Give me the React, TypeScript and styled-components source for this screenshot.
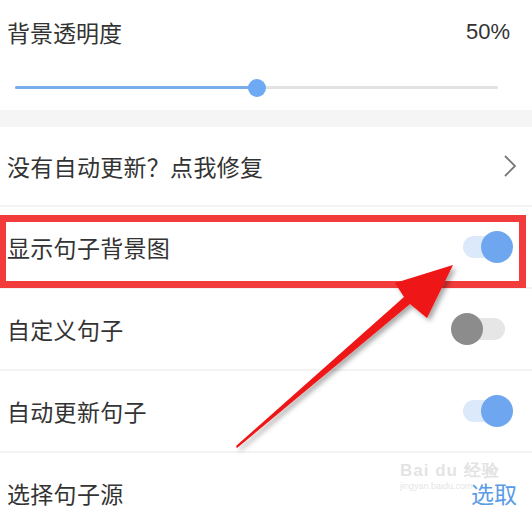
import React from "react";
import styled, { createGlobalStyle } from "styled-components";

const GlobalStyle = createGlobalStyle`
  html, body {
    margin: 0;
    padding: 0;
    background: #ffffff;
    font-family: "Noto Sans CJK SC", "Noto Sans", sans-serif;
  }
`;

const Page = styled.div`
  position: relative;
  width: 532px;
  height: 517px;
  overflow: hidden;
  background: #ffffff;
  color: #333333;
`;

const OpacitySection = styled.div`
  height: 110px;
  padding: 0 22px 0 7px;
  box-sizing: border-box;
  display: flex;
  flex-direction: column;
`;

const TitleRow = styled.div`
  display: flex;
  justify-content: space-between;
  align-items: center;
  height: 63px;
  font-size: 23px;
`;

const Percent = styled.span`
  font-family: "Liberation Sans", "Noto Sans", sans-serif;
  font-size: 22px;
  color: #333;
`;

const SliderTrack = styled.div`
  position: relative;
  margin: 23px 12px 0 8px;
  height: 3px;
  background: #e2e2e2;
  border-radius: 2px;
`;

const SliderFill = styled.div`
  height: 100%;
  background: #79acea;
  border-radius: 2px;
`;

const SliderThumb = styled.div`
  position: absolute;
  top: 50%;
  width: 18px;
  height: 18px;
  margin: -9px 0 0 -9px;
  border-radius: 50%;
  background: #6ea9f4;
`;

const GapBand = styled.div`
  height: 17px;
  background: #f5f5f5;
`;

const Row = styled.div<{ $h?: number }>`
  position: relative;
  height: ${(p) => p.$h ?? 82}px;
  box-sizing: border-box;
  padding: 0 15px 0 7px;
  display: flex;
  align-items: center;
  justify-content: space-between;
  border-bottom: 2px solid #f3f3f3;
  font-size: 23px;
  &:last-child {
    border-bottom: none;
  }
`;

const Label = styled.span`
  letter-spacing: 0.3px;
`;

const Switch = styled.div<{ $on: boolean }>`
  position: relative;
  width: 42px;
  height: 22px;
  margin-right: 12px;
  border-radius: 11px;
  background: ${(p) => (p.$on ? "#dce9fa" : "#e6e6e6")};
  &::after {
    content: "";
    position: absolute;
    top: -5px;
    left: ${(p) => (p.$on ? "18px" : "-12px")};
    width: 32px;
    height: 32px;
    border-radius: 50%;
    background: ${(p) => (p.$on ? "#6ea6ef" : "#8c8c8c")};
  }
`;

const PickLink = styled.span`
  color: #5a9be6;
  font-size: 23px;
`;

const Highlight = styled.div`
  position: absolute;
  left: 0;
  right: 6px;
  top: 8px;
  bottom: -1px;
  border: 7px solid #f23b3b;
  border-left-width: 6px;
  pointer-events: none;
`;

const Watermark = styled.div`
  position: absolute;
  left: 400px;
  top: 462px;
  color: rgba(200, 200, 200, 0.5);
  font-family: "Liberation Sans", sans-serif;
  line-height: 1;
  pointer-events: none;
`;

const WmTop = styled.div`
  font-size: 17px;
  font-weight: bold;
  letter-spacing: 1px;
`;

const WmBottom = styled.div`
  font-size: 9px;
  margin-top: 3px;
`;

const ArrowLayer = styled.svg`
  position: absolute;
  left: 0;
  top: 0;
  pointer-events: none;
`;

const Chevron = () => (
  <svg width="14" height="24" viewBox="0 0 14 24">
    <path d="M2 2 L12 12 L2 22" fill="none" stroke="#777" strokeWidth="1.8" />
  </svg>
);

export default function App() {
  const value = 50;
  return (
    <>
      <GlobalStyle />
      <Page>
        <OpacitySection>
          <TitleRow>
            <span>背景透明度</span>
            <Percent>{value}%</Percent>
          </TitleRow>
          <SliderTrack>
            <SliderFill style={{ width: `${value}%` }} />
            <SliderThumb style={{ left: `${value}%` }} />
          </SliderTrack>
        </OpacitySection>
        <GapBand />
        <Row $h={80}>
          <Label>没有自动更新？点我修复</Label>
          <Chevron />
        </Row>
        <Row>
          <Label>显示句子背景图</Label>
          <Switch $on />
          <Highlight />
        </Row>
        <Row>
          <Label>自定义句子</Label>
          <Switch $on={false} />
        </Row>
        <Row>
          <Label>自动更新句子</Label>
          <Switch $on />
        </Row>
        <Row>
          <Label>选择句子源</Label>
          <PickLink>选取</PickLink>
        </Row>
        <Watermark>
          <WmTop>Bai du 经验</WmTop>
          <WmBottom>jingyan.baidu.com</WmBottom>
        </Watermark>
        <ArrowLayer width="532" height="517" viewBox="0 0 532 517">
          <defs>
            <filter id="sh" x="-20%" y="-20%" width="140%" height="140%">
              <feDropShadow dx="3" dy="3" stdDeviation="2.5" floodColor="#000" floodOpacity="0.35" />
            </filter>
          </defs>
          <polygon
            filter="url(#sh)"
            fill="#ee1414"
            points="237,448 410,304 427,318 453,265 395,283 404,297 236,446"
          />
        </ArrowLayer>
      </Page>
    </>
  );
}
